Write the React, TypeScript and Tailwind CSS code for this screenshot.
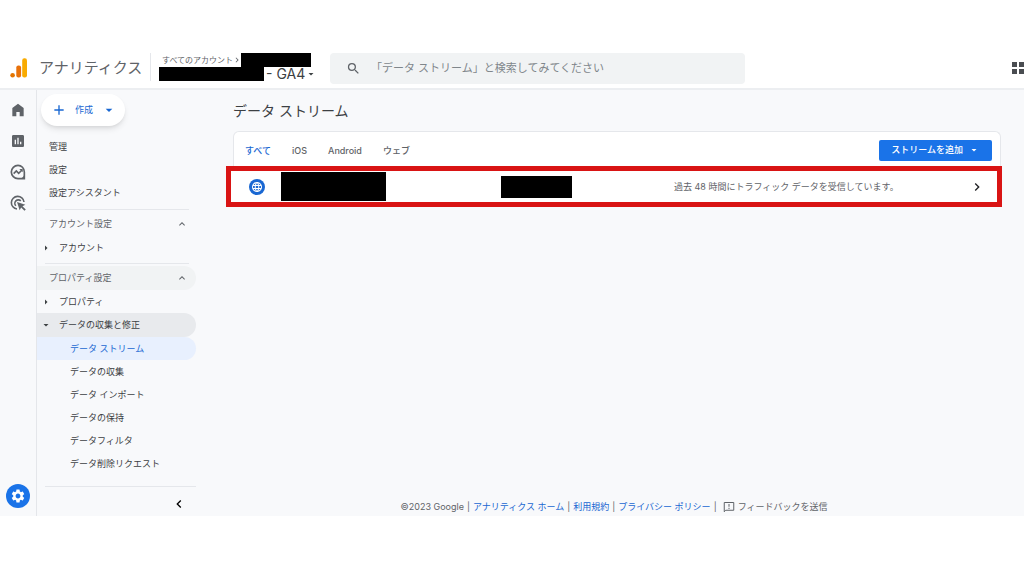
import { useState } from 'react'
import { clsx } from 'clsx'
import {
  MdAdd,
  MdArrowDropDown,
  MdArrowRight,
  MdChevronLeft,
  MdChevronRight,
  MdExpandLess,
  MdInsertChart,
  MdLanguage,
  MdSearch,
  MdSettings,
} from 'react-icons/md'

const topLinks = ['管理', '設定', '設定アシスタント']

const collectionLinks = [
  'データ ストリーム',
  'データの収集',
  'データ インポート',
  'データの保持',
  'データフィルタ',
  'データ削除リクエスト',
]

const tabs = ['すべて', 'iOS', 'Android', 'ウェブ']

function AnalyticsLogo() {
  return (
    <svg viewBox="0 0 18 20" className="w-[18px] h-5" aria-hidden="true">
      <rect x="12.2" y="0.3" width="4.8" height="19.2" rx="2.1" fill="#f9ab00" />
      <rect x="6.3" y="7.5" width="4.8" height="12" rx="2.1" fill="#e8710a" />
      <circle cx="2.6" cy="17.2" r="2.3" fill="#e37400" />
    </svg>
  )
}

function HomeIcon() {
  return (
    <svg viewBox="0 0 24 24" className="w-4 h-4" fill="currentColor" aria-hidden="true">
      <path d="M3.5 21.5V9L12 2.5 20.5 9v12.5h-6V15h-5v6.5z" />
    </svg>
  )
}

function ExploreIcon() {
  return (
    <svg viewBox="0 0 24 24" className="w-4 h-4" fill="none" stroke="currentColor" aria-hidden="true">
      <path d="M12 2a10 10 0 1 0 0 20h9.5V12A9.5 10 0 0 0 12 2z" strokeWidth="2.5" />
      <path d="M5.5 14.5l4-4L13 14l5-5" strokeWidth="2.4" />
      <path d="M22 15v7h-7c3.5-1 6-3.5 7-7z" fill="currentColor" stroke="none" />
      <path d="M14 7.5h5v5z" fill="currentColor" stroke="none" />
    </svg>
  )
}

function AdsIcon() {
  return (
    <svg viewBox="0 0 24 24" className="w-4 h-4" fill="none" stroke="currentColor" aria-hidden="true">
      <path d="M10.5 21A9.5 9.5 0 1 1 21 10.5" strokeWidth="2.4" />
      <path d="M8.8 16.2A5.2 5.2 0 1 1 16.2 8.8" strokeWidth="2.4" />
      <path d="M10.5 10.5l12.5 4-4.3 2.2 5 5-2 2-5-5-2.2 4.3z" fill="currentColor" stroke="none" />
    </svg>
  )
}

function FeedbackIcon() {
  return (
    <svg viewBox="0 0 24 24" className="w-3 h-3" fill="none" stroke="currentColor" strokeWidth="2" aria-hidden="true">
      <path d="M2.5 21.5V3h19v15.5h-16z" />
      <path d="M12 6v5.500M12 13.5V16" />
    </svg>
  )
}

function Header() {
  return (
    <header className="flex items-center h-[42px] border-b-2 border-[#eceef1] bg-white overflow-hidden">
      <a href="#" className="flex items-center gap-[11px] pl-[10px] w-[150px] shrink-0">
        <AnalyticsLogo />
        <span className="text-[15px] leading-5 text-[#5f6368] whitespace-nowrap">アナリティクス</span>
      </a>
      <button type="button" className="w-[172px] shrink-0 pl-2 mb-[2px] border-l border-gray-200 text-left">
        <span className="flex items-center h-[14px] pl-[3px] text-[8px] text-[#5f6368] whitespace-nowrap">
          すべてのアカウント
          <MdChevronRight className="w-[10px] h-[10px] -mx-px shrink-0" />
          <span className="w-[70px] h-[14px] bg-black" />
        </span>
        <span className="flex items-center h-[14px] text-sm leading-[14px] text-[#3c4043] whitespace-nowrap">
          <span className="w-[105px] h-[14px] mr-[2px] bg-black" />
          - GA4
          <MdArrowDropDown className="w-3 h-3" />
        </span>
      </button>
      <label className="flex items-center gap-[10px] w-[415px] h-[31px] ml-2 pl-4 rounded bg-[#f1f3f4]">
        <MdSearch className="w-[15px] h-[15px] text-[#5f6368] shrink-0" />
        <input
          type="search"
          aria-label="検索"
          placeholder="「データ ストリーム」と検索してみてください"
          className="w-full bg-transparent text-[11px] outline-none placeholder:text-[#80868b]"
        />
      </label>
      <button type="button" aria-label="アプリ" className="grid grid-cols-3 gap-[2px] ml-auto -mr-[7px] shrink-0">
        {[0, 1, 2, 3, 4, 5].map((i) => (
          <span key={i} className="w-[5px] h-[5px] bg-[#4a4d51]" />
        ))}
      </button>
    </header>
  )
}

function Rail() {
  return (
    <nav className="flex flex-col items-center gap-[15px] w-[37px] shrink-0 pt-3 pr-px pb-2 border-r border-[#e4e6ea] text-[#5f6368]">
      <a href="#" aria-label="ホーム"><HomeIcon /></a>
      <a href="#" aria-label="レポート"><MdInsertChart className="w-4 h-4" /></a>
      <a href="#" aria-label="探索"><ExploreIcon /></a>
      <a href="#" aria-label="広告"><AdsIcon /></a>
      <a
        href="#"
        aria-label="管理"
        className="flex items-center justify-center w-6 h-6 mt-auto rounded-full bg-[#1a73e8] text-white"
      >
        <MdSettings className="w-4 h-4" />
      </a>
    </nav>
  )
}

function Sidebar() {
  const [active, setActive] = useState(collectionLinks[0])

  return (
    <aside className="w-[159px] shrink-0 text-[9px] text-[#3c4043]">
      <button
        type="button"
        className="flex items-center w-[84px] h-8 mt-1 ml-1 pl-[10px] rounded-full bg-white shadow-md text-[#1967d2]"
      >
        <MdAdd className="w-4 h-4" />
        <span className="ml-2">作成</span>
        <MdArrowDropDown className="w-4 h-4 ml-2" />
      </button>

      <div className="mt-2 pt-px">
        {topLinks.map((label) => (
          <a key={label} href="#" className="flex items-center h-[23px] pl-3">{label}</a>
        ))}
      </div>

      <div className="mt-[5px] ml-2 mr-[7px] border-t border-gray-200" />
      <button type="button" className="flex items-center justify-between w-full h-6 mt-[2px] pl-3 pr-2 text-[#5f6368]">
        アカウント設定
        <MdExpandLess className="w-3 h-3" />
      </button>
      <a href="#" className="flex items-center h-[23px]">
        <MdArrowRight className="w-3 h-3 ml-[3px] mr-[7px]" />
        アカウント
      </a>

      <div className="mt-1 ml-2 mr-[7px] border-t border-gray-200" />
      <button
        type="button"
        className="flex items-center justify-between w-full h-6 mt-[2px] pl-3 pr-2 rounded-r-full bg-[#f1f3f4] text-[#5f6368]"
      >
        プロパティ設定
        <MdExpandLess className="w-3 h-3" />
      </button>
      <a href="#" className="flex items-center h-[23px]">
        <MdArrowRight className="w-3 h-3 ml-[3px] mr-[7px]" />
        プロパティ
      </a>
      <a href="#" className="flex items-center h-6 rounded-r-full bg-[#e8eaed]">
        <MdArrowDropDown className="w-3 h-3 ml-[3px] mr-[7px]" />
        データの収集と修正
      </a>
      <div className="pb-[11px]">
        {collectionLinks.map((label) => (
          <a
            key={label}
            href="#"
            onClick={() => setActive(label)}
            className={clsx(
              'flex items-center h-[23px] pl-[33px] rounded-r-full whitespace-nowrap',
              active === label && 'bg-[#e8f0fe] text-[#1967d2]'
            )}
          >
            {label}
          </a>
        ))}
      </div>

      <div className="ml-2 border-t border-gray-200" />
      <div className="flex justify-end pt-[9px] pr-[9px] pb-1">
        <button type="button" aria-label="メニューを折りたたむ">
          <MdChevronLeft className="w-4 h-4 text-black" />
        </button>
      </div>
    </aside>
  )
}

function Footer() {
  return (
    <footer className="flex items-center justify-center gap-[3px] mt-auto h-[18px] pl-2 text-[9px] text-[#5f6368] whitespace-nowrap">
      <span>©2023 Google</span>
      <span>|</span>
      <a href="#" className="text-[#1967d2]">アナリティクス ホーム</a>
      <span>|</span>
      <a href="#" className="text-[#1967d2]">利用規約</a>
      <span>|</span>
      <a href="#" className="text-[#1967d2]">プライバシー ポリシー</a>
      <span>|</span>
      <button type="button" className="flex items-center gap-[3px] ml-[3px]">
        <FeedbackIcon />
        フィードバックを送信
      </button>
    </footer>
  )
}

export default function App() {
  const [tab, setTab] = useState('すべて')

  return (
    <div className="pt-12 bg-white font-['Inter','Noto_Sans_CJK_JP',sans-serif]">
      <Header />
      <div className="flex bg-[#f8f9fb]">
        <Rail />
        <Sidebar />
        <div className="flex flex-col flex-1 min-w-0">
          <main className="pl-[37px] pr-[23px]">
            <h1 className="h-[41px] pt-[11px] text-sm leading-5 text-[#3c4043]">データ ストリーム</h1>
            <section>
              <div className="flex items-center h-[35px] px-2 border border-b-0 border-gray-200 rounded-t-md bg-white">
                <div role="tablist" className="flex gap-[21px] pl-[3px] pt-[3px] text-[9px] font-medium text-[#5f6368]">
                  {tabs.map((name) => (
                    <button
                      key={name}
                      type="button"
                      role="tab"
                      aria-selected={tab === name}
                      onClick={() => setTab(name)}
                      className={clsx(tab === name && 'text-[#1967d2]')}
                    >
                      {name}
                    </button>
                  ))}
                </div>
                <button
                  type="button"
                  className="flex items-center gap-[5px] h-[21px] mt-[2px] ml-auto px-3 rounded-xs bg-[#1a73e8] text-[9px] font-medium text-white"
                >
                  ストリームを追加
                  <MdArrowDropDown className="w-3 h-3" />
                </button>
              </div>
              <a
                href="#"
                className="flex items-center h-[41px] -ml-[7px] -mr-px pl-[18px] pr-3 border-5 border-[#d91414] bg-white text-[9px] text-[#5f6368]"
              >
                <span className="flex items-center justify-center w-4 h-4 rounded-full bg-[#1967d2] text-white">
                  <MdLanguage className="w-3 h-3" />
                </span>
                <span className="w-[105px] h-[29px] ml-4 bg-black" />
                <span className="w-[71px] h-[22px] ml-auto bg-black" />
                <span className="ml-[102px] w-[295px]">過去 48 時間にトラフィック データを受信しています。</span>
                <MdChevronRight className="w-4 h-4 text-[#202124]" />
              </a>
            </section>
          </main>
          <Footer />
        </div>
      </div>
    </div>
  )
}
